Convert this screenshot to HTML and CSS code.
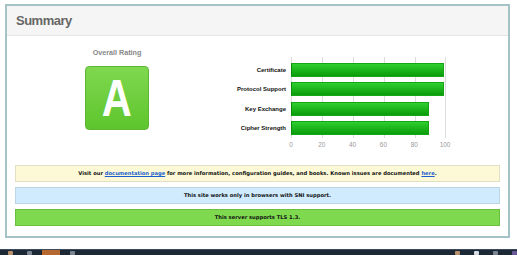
FILE: index.html
```html
<!DOCTYPE html>
<html lang="en">
<head>
  <meta charset="UTF-8" />
  <title>SSL Report - Summary</title>
  <link rel="stylesheet" href="styles.css">
</head>
<body>

<div class="report">
  <div class="report-title">Summary</div>

  <div class="report-body">
    <div class="summary-top">

      <!-- Grade -->
      <div class="rating">
        <div class="rating-label">Overall Rating</div>
        <div class="grade"><span>A</span></div>
      </div>

      <!-- Chart -->
      <div class="chart">
        <div class="chart-labels">
          <div>Certificate</div>
          <div>Protocol Support</div>
          <div>Key Exchange</div>
          <div>Cipher Strength</div>
        </div>
        <div class="chart-main">
          <div class="plot">
            <div class="bar" style="width: 100%"></div>
            <div class="bar" style="width: 100%"></div>
            <div class="bar" style="width: 90%"></div>
            <div class="bar" style="width: 90%"></div>
          </div>
          <div class="axis">
            <span>0</span><span>20</span><span>40</span><span>60</span><span>80</span><span>100</span>
          </div>
        </div>
      </div>

    </div>

    <div class="notice notice-warn">Visit our <a href="#">documentation page</a> for more information, configuration guides, and books. Known issues are documented <a href="#">here</a>.</div>
    <div class="notice notice-info">This site works only in browsers with SNI support.</div>
    <div class="notice notice-good">This server supports TLS 1.3.</div>
  </div>
</div>

<div class="taskbar">
  <span class="tb-icon tb-tan"></span>
  <span class="tb-icon tb-grey"></span>
  <span class="tb-active"></span>
  <span class="tb-icon tb-grey"></span>
  <span class="tb-spacer"></span>
  <span class="tb-icon tb-tan"></span>
  <span class="tb-icon tb-white"></span>
  <span class="tb-icon tb-grey"></span>
  <span class="tb-icon tb-purple"></span>
</div>

</body>
</html>
```

FILE: styles.css
```css
* { box-sizing: border-box; }
body { margin: 0; background: #fff; font-family: "Liberation Sans", Arial, sans-serif; color: #222; }

.report {
  margin: 4px 7px 11px 5px;
  border: 2px solid #a3c3c6;
  background: #fff;
}

.report-title {
  height: 30px;
  background: #f5f5f5;
  border-bottom: 1px solid #e4e4e4;
  padding-left: 9px;
  font-size: 13px;
  font-weight: bold;
  color: #666;
  line-height: 29px;
  letter-spacing: -0.5px;
}

.summary-top {
  display: flex;
  align-items: flex-start;
  height: 121px;
}

.rating {
  width: 220px;
  display: flex;
  flex-direction: column;
  align-items: center;
  padding-top: 12px;
}

.rating-label {
  font-size: 7.2px;
  font-weight: bold;
  color: #888;
  line-height: 9px;
}

.grade {
  margin-top: 9px;
  width: 64px;
  height: 64px;
  border: 1px solid #5db534;
  border-radius: 4px;
  background: linear-gradient(#7fd84f, #5ec52d);
  color: #fff;
  font-size: 52px;
  font-weight: bold;
  line-height: 62px;
  text-align: center;
}

.grade span {
  display: inline-block;
  transform: scaleX(0.8);
}

.chart {
  display: flex;
  margin-top: 21px;
}

.chart-labels {
  width: 59px;
  padding-top: 6px;
  text-align: right;
  font-size: 6px;
  font-weight: bold;
  color: #111;
  white-space: nowrap;
}

.chart-labels div {
  height: 19.4px;
  line-height: 14px;
}

.chart-main { margin-left: 5px; }

.plot {
  width: 155px;
  height: 81px;
  padding: 6px 1px 0 0;
  border-right: 1px solid #dcdcdc;
  background: linear-gradient(to right, #dcdcdc 1px, transparent 1px) 0 0 / 31px 100%;
}

.bar {
  height: 14px;
  margin-bottom: 5.4px;
  background: linear-gradient(#2fcf2f, #0a9c0a);
  border: 1px solid #16a516;
  border-left-color: #0b8f0b;
}

.axis {
  display: flex;
  justify-content: space-between;
  width: 154px;
  padding-top: 3px;
  font-size: 6.4px;
  color: #999;
}

.axis span {
  width: 0;
  display: flex;
  justify-content: center;
  white-space: nowrap;
}

.notice {
  margin: 0 8px 5px;
  height: 17px;
  line-height: 15px;
  border: 1px solid;
  text-align: center;
  font-family: "DejaVu Sans", Verdana, sans-serif;
  font-size: 5.2px;
  font-weight: bold;
  color: #111;
}

.notice a { color: #1b5fce; }

.notice-warn { margin-top: 8px; background: #fdf9d6; border-color: #e2dfc4; }
.notice-info { background: #cfebfd; border-color: #bcd6e4; }
.notice-good { background: #7fd94f; border-color: #6bbf3f; margin-bottom: 10px; }

.taskbar {
  display: flex;
  align-items: flex-end;
  height: 6px;
  background: #1d2837;
  border-top: 1px solid #3c4b5d;
  padding-left: 8px;
  gap: 14px;
}

.tb-icon { width: 5px; height: 4px; border-radius: 1px; }
.tb-tan { background: #b8916a; }
.tb-grey { background: #7a8494; }
.tb-white { background: #d8dde4; }
.tb-purple { background: #6a5a9a; }
.tb-active { width: 18px; height: 5px; background: #b5682f; margin: 0 -4px; }
.tb-spacer { flex: 1; }
```
